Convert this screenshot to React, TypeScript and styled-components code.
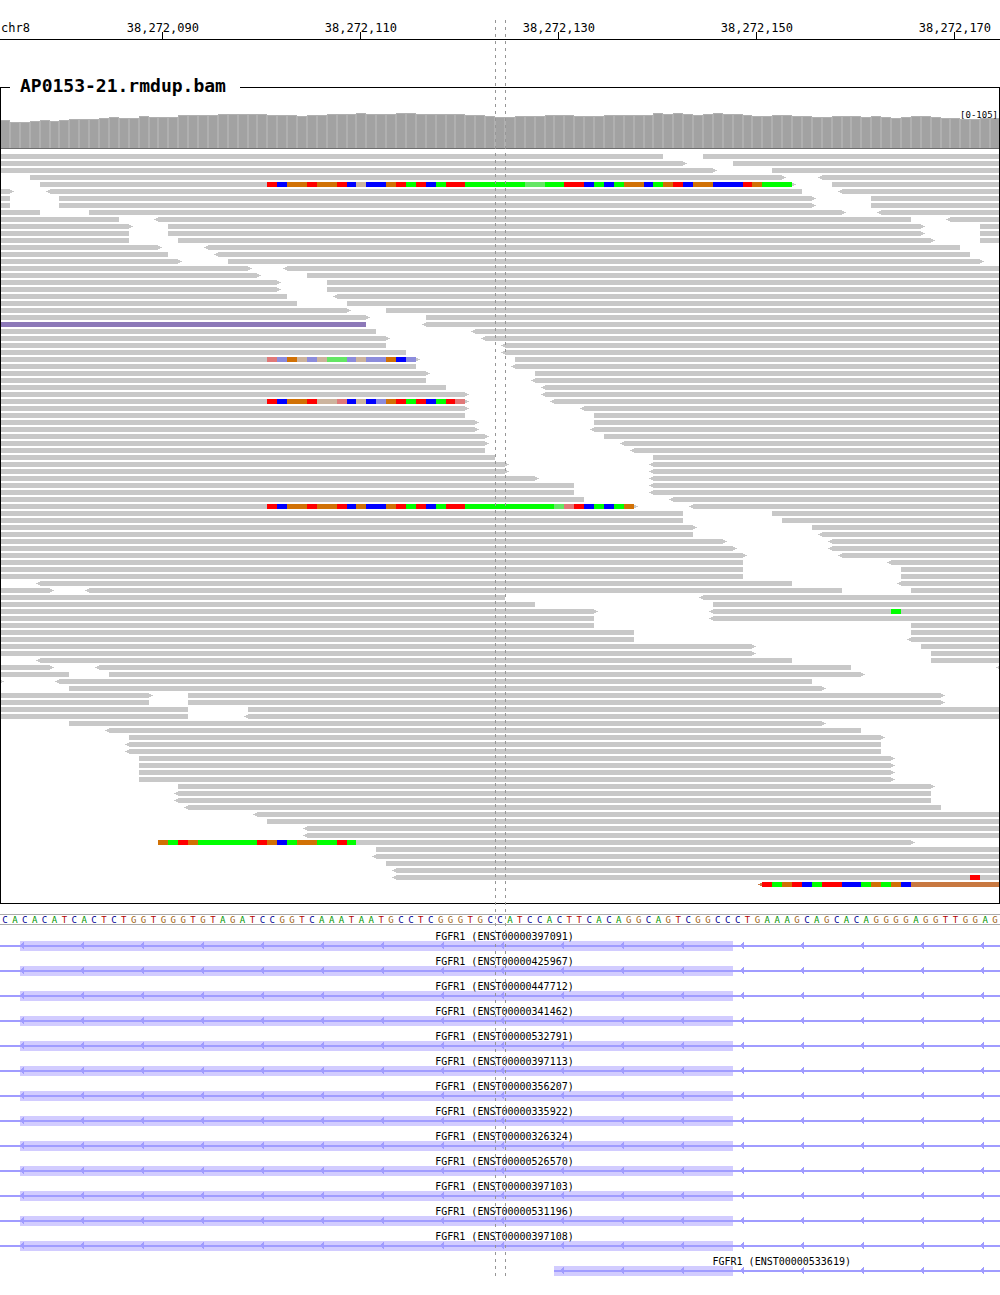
import React from "react";
import styled, { createGlobalStyle, css } from "styled-components";

const GlobalStyle = createGlobalStyle`
  body {
    margin: 0;
    background: #fff;
    color: #000;
    font-family: "DejaVu Sans Mono", "Liberation Mono", monospace;
  }
`;

/* ---------- data ---------- */

const SEQUENCE =
  "CACACATCACTCTGGTGGGTGTAGATCCGGTCAAATAATGCCTCGGGTGC" +
  "CATCCACTTCACAGGCAGTCGGCCCTGAAAGCAGCACAGGGGAGGTTGGAG";

const BASES = SEQUENCE.length;

const RULER = [
  { base: 16, label: "38,272,090" },
  { base: 36, label: "38,272,110" },
  { base: 56, label: "38,272,130" },
  { base: 76, label: "38,272,150" },
  { base: 96, label: "38,272,170" },
];

/* [number of bases, bar height] */
const COVERAGE_RUNS: [number, number][] = [
  [1, 28], [2, 26], [1, 27], [1, 28], [1, 27], [1, 28], [3, 29], [1, 30], [1, 31],
  [2, 30], [1, 32], [3, 31], [4, 33], [5, 34], [3, 33], [1, 32], [2, 33], [3, 34],
  [1, 35], [3, 34], [2, 35], [5, 34], [2, 33], [1, 32], [2, 31], [3, 32], [3, 33],
  [3, 32], [5, 33], [1, 35], [1, 34], [1, 35], [1, 34], [1, 33], [1, 34], [1, 35],
  [2, 34], [1, 33], [2, 32], [2, 33], [2, 32], [2, 31], [3, 32], [1, 31], [1, 32],
  [1, 31], [1, 30], [1, 31], [2, 32], [1, 31], [2, 30], [2, 29], [2, 30],
];

const COVERAGE = COVERAGE_RUNS.flatMap(([n, h]) => Array<number>(n).fill(h));

/*
 * One line per packed row. A read is start-end in bases; "<" or ">" marks the
 * strand tip, "@base:letters" lists mismatches (lower case = low quality),
 * "~tone" recolours a read with an unusual insert size.
 */
const READ_ROWS = `
0-67 71-101
0-69> 74-101
0-72> 78-101
3-79> <83-101
4-80>@27:RBOOROORBoBBORGRBGRRGGGGGGggGGRRBGBGOOBGORBOOBBBROGGG 84-101
0-1> <5-81 <85-101
0-1 6-82> 88-101
0-1 6-82> 88-101
0-4 9-85> <89-101
0-12 <16-92 <96-101
0-13> 17-93> 99-101
0-13 17-93> 99-101
0-13 18-94> 99-101
0-16> <21-97
0-17 <22-98
0-18> 23-99>
0-25> <29-101
0-26> 31-101
0-28> 33-101
0-28> 33-101
0-29 <34-101
0-30 35-101
0-35> 39-101
0-37> 43-101
0-37~purple <43-101
0-38 <48-101
0-39> <49-101
0-39 <51-101
0-41 <51-101
0-42>@27:rbOoboggbobbOBb 52-101
0-42 <52-101
0-43> 54-101
0-43 <54-101
0-45 <55-101
0-47> <55-101
0-47>@27:RBOORoorBoBbORGRBGRr <56-101
0-47> <59-101
0-47 60-101
0-48> 60-101
0-48> <60-101
0-49> 61-101
0-49> <63-101
0-49 <64-101
0-50 66-101
0-51> <66-101
0-51> <66-101
0-54> <66-101
0-58 <66-101
0-58 <66-101
0-59 <68-101
0-64>@27:RBOOROORBOBBORGRBGRRGGGGGGGGGgrRBGBGO <70-101
0-69 78-101
0-69 79-101
0-70> 82-101
0-70 <83-101
0-73> <84-101
0-74> <84-101
0-75> <85-101
0-75 <90-101
0-75 91-101
0-75 91-101
<4-80 <91-101
0-5> <9-85 92-101
0-51 <71-101
0-54 72-101
0-60> <72-101@90:G
0-60 <72-101
0-60 92-101
0-64 92-101
0-64 <92-101
0-76> 93-101
0-76> 94-101
<4-80 94-101
0-5> <10-86 <101-101
0-7 11-87>
0-0> <6-82
7-83>
0-15> 19-95>
0-15 19-95>
0-19 25-101
0-19 <25-101
7-83>
<11-87
13-89>
<13-89
<13-89
14-90>
14-90>
14-90>
14-90>
18-94>
<18-94
<18-94
<19-95
<26-101
27-101
<31-101
<31-101
16-92>@16:OGROGGGGGGROBGOOGGRG
38-101
<38-101
39-101
<40-101
<40-101@98:R
<77-101@77:RGORBGRRBBGOGOB~brown
`
  .trim()
  .split("\n");

const TONES: Record<string, string> = {
  plain: "#c8c8c8",
  purple: "#8c78b8",
  brown: "#c87840",
};

const MISMATCH: Record<string, string> = {
  R: "#ff0000",
  G: "#00ff00",
  B: "#0000ff",
  O: "#d17105",
  r: "#e07878",
  g: "#64e664",
  b: "#8c8cdc",
  o: "#ccb49e",
};

const LETTER: Record<string, string> = {
  A: "#009600",
  C: "#000096",
  G: "#a06414",
  T: "#b40000",
};

const GENES = [
  "ENST00000397091", "ENST00000425967", "ENST00000447712", "ENST00000341462",
  "ENST00000532791", "ENST00000397113", "ENST00000356207", "ENST00000335922",
  "ENST00000326324", "ENST00000526570", "ENST00000397103", "ENST00000531196",
  "ENST00000397108",
]
  .map((id) => ({ id, start: 0, exon: 2 }))
  .concat([{ id: "ENST00000533619", start: 56, exon: 56 }]);

const EXON_END = 74;

/* Zero-width columns at both ends hold tips of reads that lie just outside. */
const line = (base: number) => base + 2;
const span = (start: number, end: number) =>
  start === end
    ? start === 0
      ? "1 / 2"
      : `${line(BASES)} / ${line(BASES) + 1}`
    : `${line(start)} / ${line(end)}`;

interface Read {
  start: number;
  end: number;
  tip: "left" | "right" | "none";
  tone: string;
  runs: { start: number; end: number; letter: string }[];
}

function parseRead(text: string): Read {
  const m = /^(<?)(\d+)-(\d+)(>?)(?:@(\d+):(\w+))?(?:~(\w+))?$/.exec(text)!;
  const runs: Read["runs"] = [];
  const first = Number(m[5] ?? 0);
  [...(m[6] ?? "")].forEach((letter, i) => {
    const last = runs[runs.length - 1];
    if (last && last.letter === letter) last.end += 1;
    else runs.push({ start: first + i, end: first + i + 1, letter });
  });
  return {
    start: Number(m[2]),
    end: Number(m[3]),
    tip: m[1] ? "left" : m[4] ? "right" : "none",
    tone: TONES[m[7] ?? "plain"],
    runs,
  };
}

/* ---------- styles ---------- */

const baseColumns = css`
  display: grid;
  grid-template-columns: 0 repeat(${BASES}, minmax(0, 1fr)) 0;
`;

const Page = styled.main`
  position: relative;
  padding-bottom: 20px;
  overflow: hidden;
`;

const Ruler = styled.header`
  ${baseColumns}
  height: 17px;
  padding-top: 22px;
  margin-bottom: 47px;
  border-bottom: 1px solid #000;
  font-size: 12px;
  line-height: 12px;
  white-space: nowrap;
`;

const Chromosome = styled.span`
  grid-area: 1 / 2;
  padding-left: 1px;
`;

const Tick = styled.div`
  grid-row: 1;
  display: flex;
  flex-direction: column;
  align-items: center;
  padding-right: 1px;

  &::after {
    content: "";
    width: 1px;
    height: 7px;
    margin-top: -2px;
    background: #000;
  }
`;

const Panel = styled.section`
  display: flow-root;
  position: relative;

  &::after {
    content: "";
    position: absolute;
    inset: 0;
    border: 1px solid #000;
    pointer-events: none;
  }
`;

const PanelTitle = styled.h1`
  position: relative;
  z-index: 1;
  width: fit-content;
  margin: -10px 0 0 10px;
  padding: 0 14px 0 10px;
  background: #fff;
  font-size: 18px;
  line-height: 17px;
`;

const Coverage = styled.div`
  ${baseColumns}
  position: relative;
  align-items: end;
  height: 54px;
  border-bottom: 1px solid #6e6e6e;
`;

const CoverageBar = styled.div`
  box-sizing: border-box;
  grid-row: 1;
  border: 1px solid #b0b0b0;
  border-bottom: 0;
  background: #a2a2a2;
`;

const CoverageRange = styled.span`
  position: absolute;
  top: 16px;
  right: 2px;
  font-size: 9px;
  line-height: 10px;
`;

const Reads = styled.div`
  display: grid;
  gap: 2px;
  padding: 5px 0 17px;
`;

const ReadRow = styled.div`
  ${baseColumns}
  height: 5px;
`;

const tipShape = css`
  content: "";
  position: absolute;
  top: 0;
  width: 4px;
  height: 5px;
`;

const ReadBar = styled.div<{ $tone: string; $tip: Read["tip"] }>`
  position: relative;
  grid-row: 1;
  background: ${(p) => p.$tone};

  ${(p) =>
    p.$tip === "right" &&
    css`
      &::after {
        ${tipShape}
        left: 100%;
        background:
          linear-gradient(${p.$tone}, ${p.$tone}) 0 1px / 2px 3px no-repeat,
          linear-gradient(${p.$tone}, ${p.$tone}) 0 2px / 4px 1px no-repeat;
      }
    `}

  ${(p) =>
    p.$tip === "left" &&
    css`
      &::before {
        ${tipShape}
        right: 100%;
        background:
          linear-gradient(${p.$tone}, ${p.$tone}) 2px 1px / 2px 3px no-repeat,
          linear-gradient(${p.$tone}, ${p.$tone}) 0 2px / 4px 1px no-repeat;
      }
    `}
`;

const MismatchRun = styled.div<{ $letter: string }>`
  position: relative;
  grid-row: 1;
  background: ${(p) => MISMATCH[p.$letter]};
`;

const Sequence = styled.div`
  ${baseColumns}
  height: 9px;
  margin-top: 10px;
  border: solid #aaa;
  border-width: 1px 0;
  font-size: 9px;
  line-height: 10px;
  text-align: center;
`;

const Base = styled.span<{ $base: string }>`
  color: ${(p) => LETTER[p.$base]};
`;

const Genes = styled.div`
  display: grid;
  gap: 5px;
  padding-top: 6px;
`;

const Gene = styled.div`
  ${baseColumns}
  grid-template-rows: 10px 10px;
`;

const GeneLabel = styled.span`
  position: relative;
  grid-row: 1;
  padding-left: 9px;
  font-size: 10px;
  line-height: 12px;
  text-align: center;
`;

const Exon = styled.div`
  grid-row: 2;
  background: #d2ccff;
`;

const Intron = styled.div`
  grid-row: 2;
  align-self: center;
  height: 2px;
  background: #a09cff;
`;

const Strand = styled.svg`
  grid-area: 2 / 1 / 3 / -1;
  display: block;
  width: 100%;
  height: 10px;
`;

const Guide = styled.div`
  position: absolute;
  z-index: 2;
  top: 20px;
  bottom: 20px;
  width: 1px;
  background: repeating-linear-gradient(#969696 0 3px, transparent 3px 7px);
  pointer-events: none;
`;

/* ---------- parts ---------- */

function ReadLine({ text }: { text: string }) {
  const reads = text.split(" ").map(parseRead);
  return (
    <ReadRow>
      {reads.map((read, i) => (
        <React.Fragment key={i}>
          <ReadBar
            $tone={read.tone}
            $tip={read.tip}
            style={{ gridColumn: span(read.start, read.end) }}
          />
          {read.runs.map((run) => (
            <MismatchRun
              key={run.start}
              $letter={run.letter}
              style={{ gridColumn: span(run.start, run.end) }}
            />
          ))}
        </React.Fragment>
      ))}
    </ReadRow>
  );
}

function Transcript({ id, start, exon }: { id: string; start: number; exon: number }) {
  return (
    <Gene>
      <GeneLabel style={{ gridColumn: span(start, BASES) }}>{`FGFR1 (${id})`}</GeneLabel>
      <Exon style={{ gridColumn: span(exon, EXON_END) }} />
      <Intron style={{ gridColumn: span(start, BASES) }} />
      <Strand aria-hidden="true" shapeRendering="crispEdges">
        <pattern id={id} x="21" y="0" width="60" height="10" patternUnits="userSpaceOnUse">
          <path d="M0 3h1v3h-1zM1 2h1v5h-1zM2 1h1v7h-1z" fill="#a09cff" />
        </pattern>
        <rect x={`${(start / BASES) * 100}%`} width="100%" height="10" fill={`url(#${id})`} />
      </Strand>
    </Gene>
  );
}

export default function App() {
  return (
    <Page>
      <GlobalStyle />
      <Ruler>
        <Chromosome>chr8</Chromosome>
        {RULER.map((t) => (
          <Tick key={t.base} style={{ gridColumn: line(t.base) }}>
            {t.label}
          </Tick>
        ))}
      </Ruler>

      <Panel>
        <PanelTitle>AP0153-21.rmdup.bam</PanelTitle>
        <Coverage>
          {COVERAGE.map((height, i) => (
            <CoverageBar key={i} style={{ gridColumn: line(i), height }} />
          ))}
          <CoverageRange>[0-105]</CoverageRange>
        </Coverage>
        <Reads>
          {READ_ROWS.map((text, i) => (
            <ReadLine key={i} text={text} />
          ))}
        </Reads>
      </Panel>

      <Sequence>
        {[...SEQUENCE].map((b, i) => (
          <Base key={i} $base={b} style={{ gridColumn: line(i) }}>
            {b}
          </Base>
        ))}
      </Sequence>

      <Genes>
        {GENES.map((g) => (
          <Transcript key={g.id} {...g} />
        ))}
      </Genes>

      <Guide style={{ left: `${(50 / BASES) * 100}%` }} />
      <Guide style={{ left: `${(51 / BASES) * 100}%` }} />
    </Page>
  );
}
